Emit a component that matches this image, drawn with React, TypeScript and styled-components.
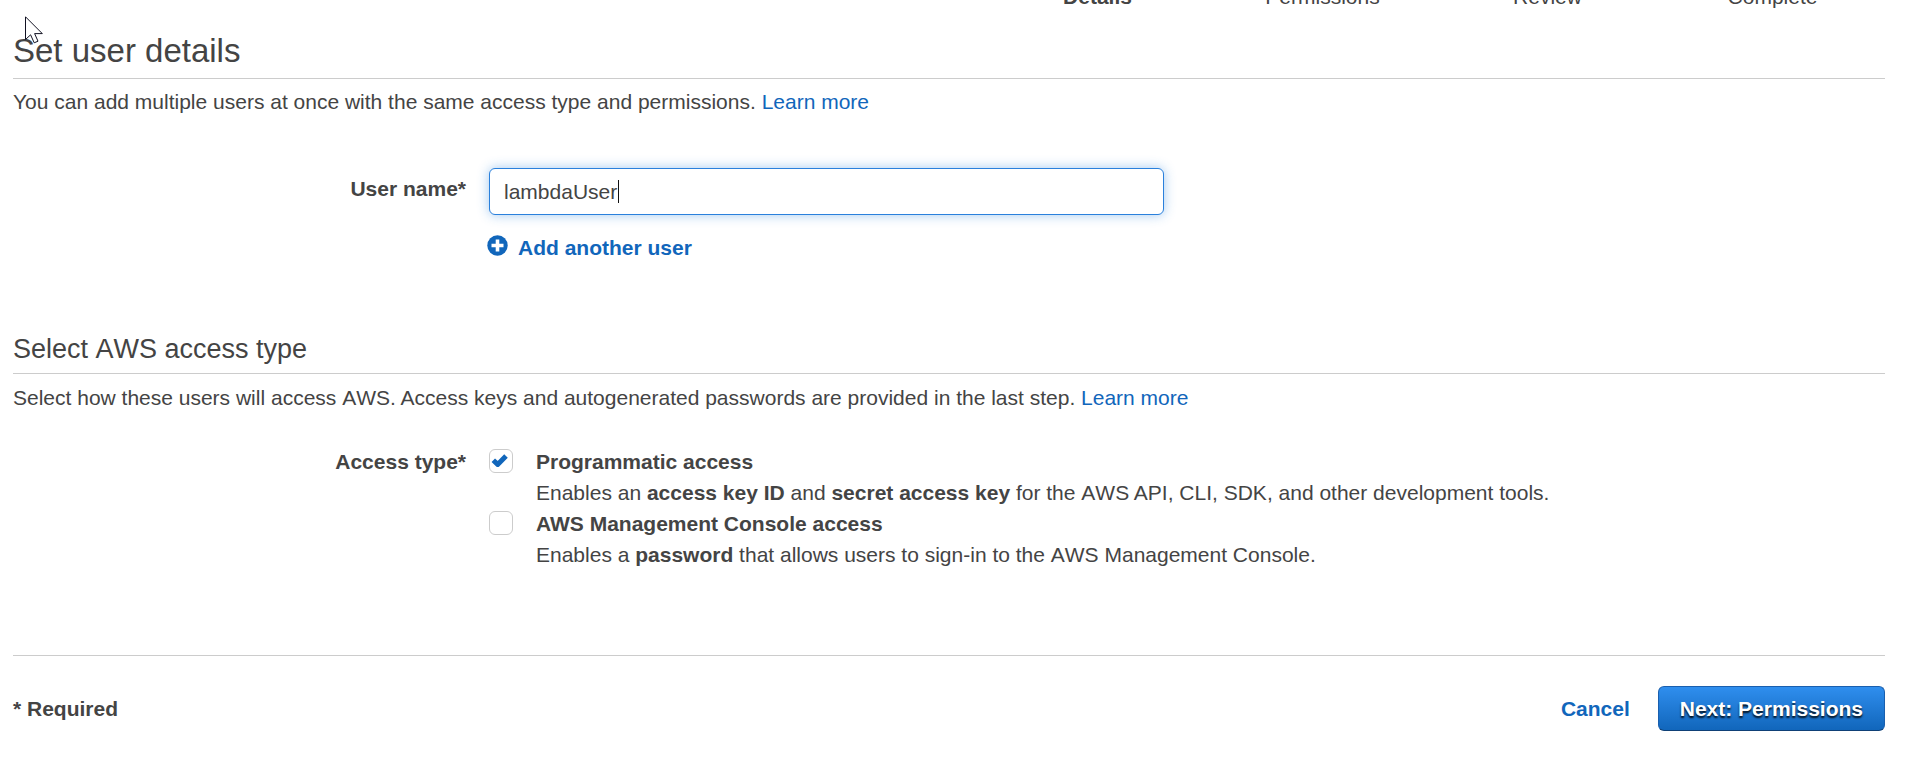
import React, { useState } from 'react';
import styled, { createGlobalStyle } from 'styled-components';

const GlobalStyle = createGlobalStyle`
  *, *::before, *::after { box-sizing: border-box; }
  body {
    margin: 0;
    background: #fff;
    color: #444;
    font: 21px/31px "Liberation Sans", Arial, sans-serif;
  }
`;

const Page = styled.div`
  display: flow-root;
  position: relative;
  padding: 0 30px 36px 13px;
`;

const Steps = styled.ol`
  display: grid;
  grid-template-columns: repeat(4, 225px);
  justify-content: end;
  margin: -16px 0 0;
  padding: 0;
  list-style: none;
  text-align: center;
  line-height: 25px;
`;

const Step = styled.li<{ $current?: boolean }>`
  font-weight: ${(p) => (p.$current ? 700 : 400)};
`;

const SectionTitle = styled.h2<{ $large?: boolean }>`
  margin: 0;
  padding: ${(p) => (p.$large ? '22px 0 8px' : '0 0 7px')};
  border-bottom: 1px solid #ccc;
  font-size: ${(p) => (p.$large ? 33 : 27)}px;
  line-height: ${(p) => (p.$large ? 39 : 33)}px;
  font-weight: 400;
`;

const Intro = styled.p`
  margin: 0;
  padding-top: 8px;

  h1 + & { padding-top: 7px; }
`;

const Acronym = styled.span`
  font-kerning: none;
`;

const TextLink = styled.a`
  color: #1166bb;
  text-decoration: none;
`;

const FormRow = styled.div<{ $top: number; $bottom: number }>`
  display: grid;
  grid-template-columns: 25% 1fr;
  margin: ${(p) => p.$top}px 0 ${(p) => p.$bottom}px;
`;

const labelText = `
  padding-right: 15px;
  font-weight: 700;
  text-align: right;
`;

const FieldLabel = styled.label`
  ${labelText}
  padding-top: 5px;
`;

const GroupLabel = styled.span`
  ${labelText}
`;

const Controls = styled.div`
  padding-left: 8px;
`;

const InputWrap = styled.div`
  position: relative;
  max-width: 675px;
`;

const TextInput = styled.input`
  display: block;
  width: 100%;
  height: 47px;
  padding: 0 14px;
  border: 1px solid #2a80dc;
  border-radius: 6px;
  outline: none;
  box-shadow: 0 0 12px rgba(46, 134, 222, 0.45);
  background: #fff;
  color: #444;
  font: inherit;
  caret-color: transparent;
`;

const Caret = styled.span`
  position: absolute;
  top: 12px;
  left: 129px;
  width: 1px;
  height: 23px;
  background: #111;
`;

const AddButton = styled.button`
  display: flex;
  align-items: center;
  gap: 10px;
  margin: 17px 0 0 -2px;
  padding: 0;
  border: 0;
  background: none;
  color: #1166bb;
  font: inherit;
  font-weight: 700;
  cursor: pointer;

  svg { margin-bottom: 4px; }
`;

const Option = styled.div`
  display: grid;
  grid-template-columns: 24px 1fr;
  column-gap: 23px;
`;

const OptionText = styled.div`
  label { display: block; font-weight: 700; }
  p { margin: 0; }
`;

const CheckWrap = styled.span`
  position: relative;
  height: 24px;
  margin-top: 3px;

  svg {
    position: absolute;
    top: 4px;
    left: 2px;
    pointer-events: none;
  }
`;

const Checkbox = styled.input`
  appearance: none;
  display: block;
  width: 24px;
  height: 24px;
  margin: 0;
  border: 1px solid #ccc;
  border-radius: 6px;
  background: #fff;
`;

const Footer = styled.footer`
  display: flex;
  align-items: center;
  gap: 28px;
  padding-top: 30px;
  border-top: 1px solid #ccc;
  font-weight: 700;
`;

const Required = styled.span`
  margin-right: auto;
`;

const NextButton = styled.button`
  height: 45px;
  padding: 0 21px;
  border: 1px solid #1a5fae;
  border-bottom-color: #0f4076;
  border-radius: 6px;
  background: linear-gradient(#2f8eee, #1166bb);
  color: #fff;
  font: inherit;
  font-weight: 700;
  text-shadow: 0 2px 2px rgba(0, 0, 0, 0.9);
  cursor: pointer;
`;

const Pointer = styled.svg`
  position: absolute;
  top: 16px;
  left: 25px;
  pointer-events: none;
`;

interface CheckOptionProps {
  id: string;
  title: React.ReactNode;
  initial: boolean;
  children: React.ReactNode;
}

function CheckOption({ id, title, initial, children }: CheckOptionProps) {
  const [checked, setChecked] = useState(initial);
  return (
    <Option>
      <CheckWrap>
        <Checkbox id={id} type="checkbox" checked={checked} onChange={(e) => setChecked(e.target.checked)} />
        {checked && (
          <svg width="18" height="16" viewBox="0 0 18 16" aria-hidden="true">
            <path
              d="M2.3 7.2 L6.7 11.4 L15 3"
              fill="none"
              stroke="#1166bb"
              strokeWidth="5"
              strokeLinejoin="round"
            />
          </svg>
        )}
      </CheckWrap>
      <OptionText>
        <label htmlFor={id}>{title}</label>
        <p>{children}</p>
      </OptionText>
    </Option>
  );
}

export default function App() {
  const [name, setName] = useState('lambdaUser');
  return (
    <>
      <GlobalStyle />
      <Page>
        <Steps>
          <Step $current>Details</Step>
          <Step>Permissions</Step>
          <Step>Review</Step>
          <Step>Complete</Step>
        </Steps>

        <SectionTitle as="h1" $large>Set user details</SectionTitle>
        <Intro>
          You can add multiple users at once with the same access type and permissions.{' '}
          <TextLink href="#users">Learn more</TextLink>
        </Intro>
        <FormRow $top={51} $bottom={70}>
          <FieldLabel htmlFor="user-name">User name*</FieldLabel>
          <Controls>
            <InputWrap>
              <TextInput id="user-name" type="text" value={name} onChange={(e) => setName(e.target.value)} />
              <Caret />
            </InputWrap>
            <AddButton type="button">
              <svg width="21" height="21" viewBox="0 0 21 21" aria-hidden="true">
                <circle cx="10.5" cy="10.5" r="10.2" fill="#1166bb" />
                <path d="M10.5 4.5V16.5M4.5 10.5H16.5" stroke="#fff" strokeWidth="3.6" />
              </svg>
              Add another user
            </AddButton>
          </Controls>
        </FormRow>

        <SectionTitle>
          Select <Acronym>AWS</Acronym> access type
        </SectionTitle>
        <Intro>
          Select how these users will access <Acronym>AWS</Acronym>. Access keys and autogenerated passwords are
          provided in the last step. <TextLink href="#access">Learn more</TextLink>
        </Intro>
        <FormRow $top={33} $bottom={85} role="group" aria-labelledby="access-type">
          <GroupLabel id="access-type">Access type*</GroupLabel>
          <Controls>
            <CheckOption id="programmatic" title="Programmatic access" initial>
              Enables an <b>access key ID</b> and <b>secret access key</b> for the <Acronym>AWS</Acronym> API, CLI,
              SDK, and other development tools.
            </CheckOption>
            <CheckOption id="console" title="AWS Management Console access" initial={false}>
              Enables a <b>password</b> that allows users to sign-in to the <Acronym>AWS</Acronym> Management
              Console.
            </CheckOption>
          </Controls>
        </FormRow>

        <Footer>
          <Required>* Required</Required>
          <TextLink href="#cancel">Cancel</TextLink>
          <NextButton type="button">Next: Permissions</NextButton>
        </Footer>

        <Pointer width="19" height="28" viewBox="0 0 19 28" aria-hidden="true">
          <path
            d="M0.5 0.8V23.5L5.6 18.8L9.2 26.8L13 25.2L9.6 17.6H17.3Z"
            fill="#fff"
            stroke="#112"
          />
        </Pointer>
      </Page>
    </>
  );
}
